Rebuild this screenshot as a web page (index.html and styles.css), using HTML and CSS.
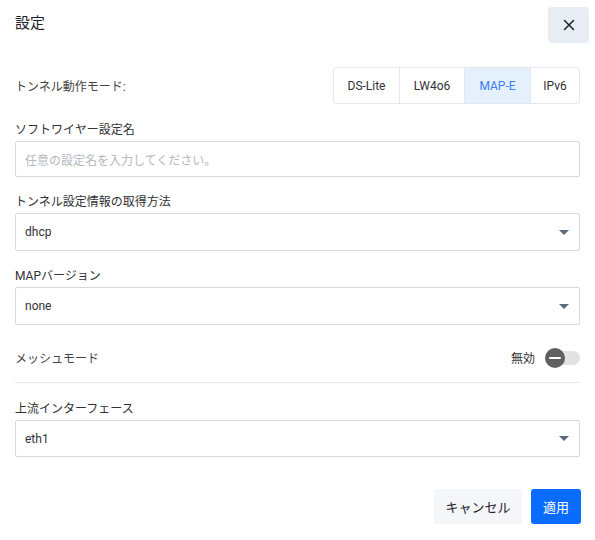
FILE: index.html
```html
<!DOCTYPE html>
<html lang="ja">
<head>
<meta charset="utf-8">
<link rel="stylesheet" href="styles.css">
</head>
<body>
<div class="dialog">
  <div class="header">
    <div class="title">設定</div>
    <button class="close" aria-label="close">
      <svg width="12" height="12" viewBox="0 0 12 12"><path d="M1.5 1.5 L10.5 10.5 M10.5 1.5 L1.5 10.5" stroke="#1f2329" stroke-width="1.5" fill="none" stroke-linecap="round"/></svg>
    </button>
  </div>

  <div class="mode-row">
    <div class="mode-label">トンネル動作モード:</div>
    <div class="segments">
      <div class="seg">DS-Lite</div>
      <div class="seg">LW4o6</div>
      <div class="seg active">MAP-E</div>
      <div class="seg">IPv6</div>
    </div>
  </div>

  <div class="field f1">
    <div class="label">ソフトワイヤー設定名</div>
    <div class="control input"><span class="placeholder">任意の設定名を入力してください。</span></div>
  </div>

  <div class="field f2">
    <div class="label">トンネル設定情報の取得方法</div>
    <div class="control select"><span>dhcp</span><span class="caret"></span></div>
  </div>

  <div class="field f2">
    <div class="label">MAPバージョン</div>
    <div class="control select"><span>none</span><span class="caret"></span></div>
  </div>

  <div class="mesh-row">
    <div class="mesh-label">メッシュモード</div>
    <div class="mesh-right">
      <span class="state">無効</span>
      <span class="toggle"><span class="knob"><span class="dash"></span></span></span>
    </div>
  </div>

  <div class="field f4">
    <div class="label">上流インターフェース</div>
    <div class="control select last"><span>eth1</span><span class="caret"></span></div>
  </div>

  <div class="footer">
    <button class="btn cancel">キャンセル</button>
    <button class="btn apply">適用</button>
  </div>
</div>
</body>
</html>
```

FILE: styles.css
```css
* { box-sizing: border-box; }
html, body {
  margin: 0;
  padding: 0;
  background: #ffffff;
}
body {
  font-family: Roboto, "Noto Sans CJK JP", "Liberation Sans", sans-serif;
  color: #303133;
  font-size: 12px;
}
.dialog {
  width: 595px;
  padding: 0 15px;
}
.header {
  height: 50px;
  display: flex;
  align-items: flex-start;
  justify-content: space-between;
}
.title {
  font-size: 15px;
  line-height: 20px;
  margin-top: 13px;
  color: #1f2329;
}
.close {
  margin-top: 7px;
  margin-right: -9px;
  width: 41px;
  height: 36px;
  border: none;
  border-radius: 4px;
  background: #e8ecf3;
  display: flex;
  align-items: center;
  justify-content: center;
  padding: 0;
}
.mode-row {
  margin-top: 17px;
  display: flex;
  align-items: center;
  justify-content: space-between;
}
.mode-label {
  color: #444;
  font-size: 12px;
}
.segments {
  display: flex;
  border: 1px solid #e4e7ec;
  border-radius: 3px;
  height: 37px;
  overflow: hidden;
}
.seg {
  display: flex;
  align-items: center;
  justify-content: center;
  font-size: 12px;
  color: #303133;
  border-left: 1px solid #e4e7ec;
}
.seg:first-child { border-left: none; width: 65px; }
.seg:nth-child(2) { width: 65px; }
.seg:nth-child(3) { width: 66px; }
.seg:nth-child(4) { width: 49px; }
.seg.active {
  background: #e4f0fc;
  color: #3d7cf5;
}
.field .label {
  font-size: 12px;
  line-height: 16px;
  color: #303133;
  margin-bottom: 3px;
}
.f1 { margin-top: 18px; }
.f2 { margin-top: 17px; }
.f4 { margin-top: 18px; }
.control {
  border: 1px solid #d6dae0;
  border-radius: 2px;
  display: flex;
  align-items: center;
  justify-content: space-between;
  padding: 0 10px 0 9px;
  font-size: 12px;
  color: #303133;
}
.input { height: 36px; }
.select { height: 38px; }
.select.last { height: 37px; }
.placeholder { color: #b4b8bf; }
.caret {
  width: 0;
  height: 0;
  border-left: 5px solid transparent;
  border-right: 5px solid transparent;
  border-top: 5px solid #5f6a7a;
}
.mesh-row {
  margin-top: 16px;
  height: 42px;
  padding-bottom: 8px;
  border-bottom: 1px solid #e4e7ec;
  display: flex;
  align-items: center;
  justify-content: space-between;
}
.mesh-label { color: #444; }
.mesh-right {
  display: flex;
  align-items: center;
}
.state {
  color: #303133;
  margin-right: 10px;
}
.toggle {
  position: relative;
  width: 35px;
  height: 14px;
  border-radius: 7px;
  background: #e2e2e2;
  display: inline-block;
}
.knob {
  position: absolute;
  left: 0;
  top: -3px;
  width: 20px;
  height: 20px;
  border-radius: 50%;
  background: #606060;
  display: flex;
  align-items: center;
  justify-content: center;
}
.dash {
  width: 12px;
  height: 2px;
  background: #ffffff;
  border-radius: 1px;
}
.footer {
  margin-top: 32px;
  display: flex;
  justify-content: flex-end;
  gap: 9px;
  margin-right: -1px;
}
.btn {
  height: 35px;
  border: none;
  border-radius: 3px;
  font-family: Roboto, "Noto Sans CJK JP", sans-serif;
  font-size: 13px;
  padding: 0;
}
.cancel {
  width: 88px;
  background: #f5f6fa;
  color: #1f2329;
}
.apply {
  width: 50px;
  background: #0a6cff;
  color: #ffffff;
}
```
